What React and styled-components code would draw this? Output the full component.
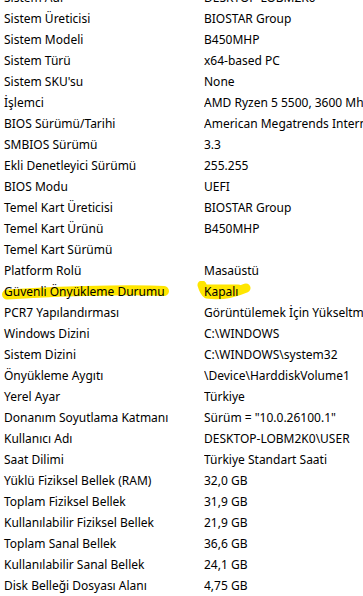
import styled, { createGlobalStyle } from "styled-components";

const Global = createGlobalStyle`
  html, body {
    margin: 0;
    padding: 0;
    background: #ffffff;
    overflow: hidden;
  }
  body {
    font-family: "Noto Sans", "Open Sans", sans-serif;
  }
`;

const rows = [
  ["Sistem Adı", "DESKTOP-LOBM2K0"],
  ["Sistem Üreticisi", "BIOSTAR Group"],
  ["Sistem Modeli", "B450MHP"],
  ["Sistem Türü", "x64-based PC"],
  ["Sistem SKU'su", "None"],
  ["İşlemci", "AMD Ryzen 5 5500, 3600 Mhz, 6 Çekirdek, 12 Mantıksal İşlemci"],
  ["BIOS Sürümü/Tarihi", "American Megatrends International, LLC. 3.3, 13.10.2023"],
  ["SMBIOS Sürümü", "3.3"],
  ["Ekli Denetleyici Sürümü", "255.255"],
  ["BIOS Modu", "UEFI"],
  ["Temel Kart Üreticisi", "BIOSTAR Group"],
  ["Temel Kart Ürünü", "B450MHP"],
  ["Temel Kart Sürümü", ""],
  ["Platform Rolü", "Masaüstü"],
  ["Güvenli Önyükleme Durumu", "Kapalı", true],
  ["PCR7 Yapılandırması", "Görüntülemek İçin Yükseltme Gerekiyor"],
  ["Windows Dizini", "C:\\WINDOWS"],
  ["Sistem Dizini", "C:\\WINDOWS\\system32"],
  ["Önyükleme Aygıtı", "\\Device\\HarddiskVolume1"],
  ["Yerel Ayar", "Türkiye"],
  ["Donanım Soyutlama Katmanı", 'Sürüm = "10.0.26100.1"'],
  ["Kullanıcı Adı", "DESKTOP-LOBM2K0\\USER"],
  ["Saat Dilimi", "Türkiye Standart Saati"],
  ["Yüklü Fiziksel Bellek (RAM)", "32,0 GB"],
  ["Toplam Fiziksel Bellek", "31,9 GB"],
  ["Kullanılabilir Fiziksel Bellek", "21,9 GB"],
  ["Toplam Sanal Bellek", "36,6 GB"],
  ["Kullanılabilir Sanal Bellek", "24,1 GB"],
  ["Disk Belleği Dosyası Alanı", "4,75 GB"],
];

const Sheet = styled.div`
  width: 363px;
  height: 596px;
  overflow: hidden;
`;

const List = styled.div`
  margin-top: -13px;
  display: flex;
  flex-direction: column;
`;

const Row = styled.div`
  position: relative;
  display: grid;
  grid-template-columns: 204px 1fr;
  height: 21px;
  align-items: center;
  font-size: 12px;
  color: #000000;
  white-space: nowrap;
`;

const Cell = styled.span`
  position: relative;
  z-index: 1;
  padding-left: ${(p) => (p.$label ? "4px" : "0")};
  overflow: hidden;
`;

const Marker = styled.svg`
  position: absolute;
  left: 0;
  top: 0;
  width: 363px;
  height: 21px;
  z-index: 0;
  pointer-events: none;
`;

function Highlight() {
  // hand-drawn yellow marker strokes, row-local coordinates
  return (
    <Marker viewBox="0 0 363 21">
      <path
        d="M7 13.5 Q60 10 110 9.5 Q145 9 164 10"
        stroke="#ffe600"
        strokeWidth="10"
        strokeLinecap="round"
        fill="none"
      />
      <path
        d="M202 4 Q204 11 207 13 Q225 16 246 7"
        stroke="#ffe600"
        strokeWidth="9"
        strokeLinecap="round"
        strokeLinejoin="round"
        fill="none"
      />
      <path
        d="M206 8 L238 8"
        stroke="#ffe600"
        strokeWidth="9"
        strokeLinecap="round"
        fill="none"
      />
    </Marker>
  );
}

export default function App() {
  return (
    <Sheet>
      <Global />
      <List>
        {rows.map(([label, value, marked]) => (
          <Row key={label}>
            {marked && <Highlight />}
            <Cell $label>{label}</Cell>
            <Cell>{value}</Cell>
          </Row>
        ))}
      </List>
    </Sheet>
  );
}
